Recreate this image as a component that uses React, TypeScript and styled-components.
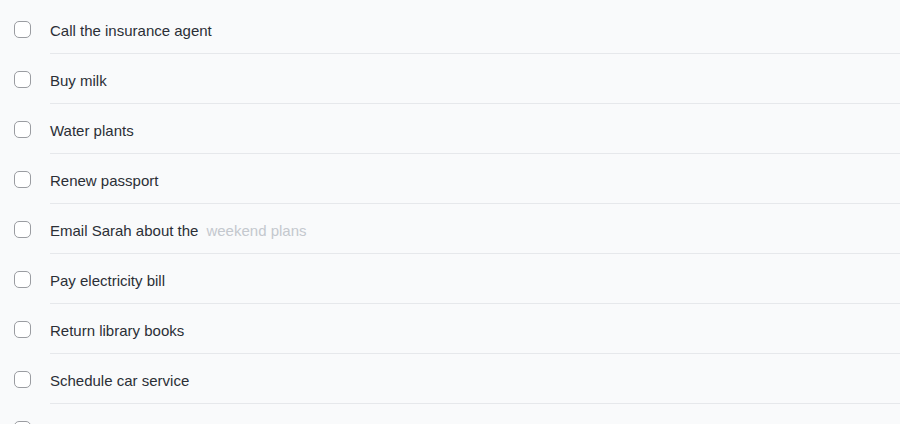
import React from "react";
import styled, { createGlobalStyle } from "styled-components";

const Global = createGlobalStyle`
  html, body { margin: 0; padding: 0; background: #f9fafb; }
  body { font-family: "Liberation Sans", Arial, sans-serif; overflow: hidden; }
`;

const List = styled.ul`
  list-style: none;
  margin: 0;
  padding: 4px 0 0 0;
  width: 900px;
  height: 424px;
  overflow: hidden;
  box-sizing: border-box;
`;

const Item = styled.li`
  display: flex;
  align-items: stretch;
  height: 50px;
`;

const CheckCell = styled.div`
  width: 50px;
  flex: 0 0 50px;
  display: flex;
  align-items: center;
  padding-left: 14px;
  box-sizing: border-box;
`;

const Box = styled.span`
  display: block;
  width: 17px;
  height: 17px;
  box-sizing: border-box;
  border: 1.5px solid #9a9ca1;
  border-radius: 5px;
  background: #ffffff;
`;

const Content = styled.div`
  flex: 1;
  display: flex;
  align-items: center;
  padding-top: 4px;
  box-sizing: border-box;
  border-bottom: 1px solid #e6e8eb;
`;

const Title = styled.span`
  font-size: 15px;
  color: #2b2f36;
  white-space: nowrap;
`;

const Note = styled.span`
  font-size: 15px;
  color: #c4c8ce;
  margin-left: 8px;
  white-space: nowrap;
`;

const items: { title: string; note?: string }[] = [
  { title: "Call the insurance agent" },
  { title: "Buy milk" },
  { title: "Water plants" },
  { title: "Renew passport" },
  { title: "Email Sarah about the", note: "weekend plans" },
  { title: "Pay electricity bill" },
  { title: "Return library books" },
  { title: "Schedule car service" },
  { title: "" },
];

export default function App() {
  return (
    <>
      <Global />
      <List>
        {items.map((it, i) => (
          <Item key={i}>
            <CheckCell>
              <Box role="checkbox" aria-checked="false" />
            </CheckCell>
            <Content>
              {it.title && <Title>{it.title}</Title>}
              {it.note && <Note>{it.note}</Note>}
            </Content>
          </Item>
        ))}
      </List>
    </>
  );
}
